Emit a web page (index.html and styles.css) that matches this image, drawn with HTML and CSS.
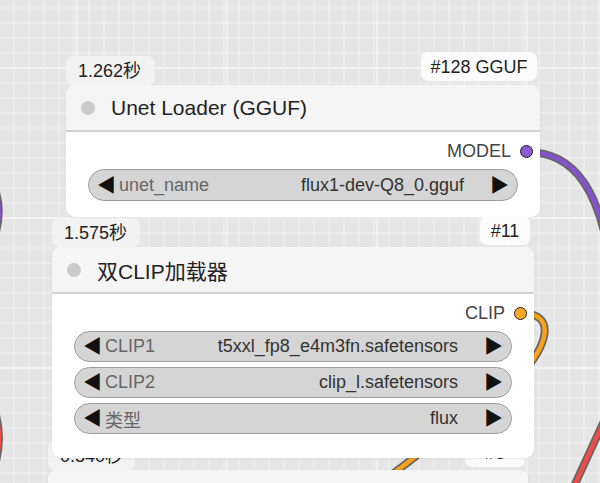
FILE: index.html
```html
<!DOCTYPE html>
<html lang="zh">
<head>
<meta charset="utf-8">
<title>Nodes</title>
<link rel="stylesheet" href="styles.css">
</head>
<body>
<div class="canvas">
  <svg class="links" width="600" height="483" viewBox="0 0 600 483">
    <g class="edge">
      <path d="M527 152 C 577 152, 600 195, 610 262"/>
      <path d="M-10 178 C 2 200, 2 222, -10 248"/>
      <path d="M-10 398 C 2 425, 2 450, -10 480"/>
      <path d="M610 408 L 570 495"/>
      <path d="M520 313 C 558 313, 548 346, 518 378 L 330 522"/>
    </g>
    <path class="core purple" d="M527 152 C 577 152, 600 195, 610 262"/>
    <path class="core purple" d="M-10 178 C 2 200, 2 222, -10 248"/>
    <path class="core red" d="M-10 398 C 2 425, 2 450, -10 480"/>
    <path class="core red" d="M610 408 L 570 495"/>
    <path class="core orange" d="M520 313 C 558 313, 548 346, 518 378 L 330 522"/>
  </svg>

  <!-- node 3 (mostly hidden) -->
  <div class="badge time n3-time">0.540秒</div>
  <div class="badge id n3-id">#6</div>
  <div class="node n3">
    <div class="node-head"><span class="dot"></span><span class="title">CLIP文本编码器</span></div>
  </div>

  <!-- node 1 -->
  <div class="badge time n1-time">1.262秒</div>
  <div class="badge id n1-id">#128 GGUF</div>
  <div class="node n1">
    <div class="node-head"><span class="dot"></span><span class="title">Unet Loader (GGUF)</span></div>
    <div class="node-body">
      <div class="output"><span>MODEL</span><span class="slot purple-slot"></span></div>
      <div class="widgets">
        <div class="widget tall"><span class="arr">◀</span><span class="lbl">unet_name</span><span class="val">flux1-dev-Q8_0.gguf</span><span class="arr">▶</span></div>
      </div>
    </div>
  </div>

  <!-- node 2 -->
  <div class="badge time n2-time">1.575秒</div>
  <div class="badge id n2-id">#11</div>
  <div class="node n2">
    <div class="node-head"><span class="dot"></span><span class="title">双CLIP加载器</span></div>
    <div class="node-body">
      <div class="output"><span>CLIP</span><span class="slot orange-slot"></span></div>
      <div class="widgets">
        <div class="widget"><span class="arr">◀</span><span class="lbl">CLIP1</span><span class="val">t5xxl_fp8_e4m3fn.safetensors</span><span class="arr">▶</span></div>
        <div class="widget"><span class="arr">◀</span><span class="lbl">CLIP2</span><span class="val">clip_l.safetensors</span><span class="arr">▶</span></div>
        <div class="widget"><span class="arr">◀</span><span class="lbl">类型</span><span class="val">flux</span><span class="arr">▶</span></div>
      </div>
    </div>
  </div>
</div>
</body>
</html>
```

FILE: styles.css
```css
* { box-sizing: border-box; }
html, body { margin: 0; padding: 0; }
body {
  width: 600px;
  height: 483px;
  overflow: hidden;
  font-family: "Liberation Sans", Arial, "Noto Sans CJK SC", sans-serif;
  color: #222;
}
.canvas {
  position: relative;
  width: 600px;
  height: 483px;
  overflow: hidden;
  background-color: #e5e5e5;
  background-image:
    linear-gradient(to right, rgba(255,255,255,0.4) 0 2px, transparent 2px),
    linear-gradient(to bottom, rgba(255,255,255,0.4) 0 2px, transparent 2px),
    linear-gradient(to right, rgba(255,255,255,0.22) 0 2px, transparent 2px),
    linear-gradient(to bottom, rgba(255,255,255,0.22) 0 2px, transparent 2px);
  background-size: 150px 150px, 150px 150px, 15px 15px, 15px 15px;
  background-position: 76px 0, 0 67px, 13px 0, 0 7px;
}
.links { position: absolute; left: 0; top: 0; }
.edge path { fill: none; stroke: #666; stroke-width: 8; }
.core { fill: none; stroke-width: 4.5; }
.purple { stroke: #8552cc; }
.red { stroke: #ee4b4b; }
.orange { stroke: #f9a11b; }

.badge {
  position: absolute;
  height: 29px;
  display: flex;
  align-items: center;
  padding: 0 10px 0 12px;
  border-radius: 7px;
  font-size: 18px;
  color: #222;
  line-height: 1;
  white-space: nowrap;
}
.badge.time { background: #f2f2f2; }
.badge.id { background: #fbfbfb; justify-content: center; padding: 0; }

.n1-time { left: 66px; top: 56px; width: 89px; }
.n1-id { left: 421px; top: 52px; width: 116px; }
.n2-time { left: 52px; top: 218px; width: 88px; }
.n2-id { left: 480px; top: 216px; width: 50px; }
.n3-time { left: 48px; top: 441px; width: 87px; }
.n3-id { left: 465px; top: 438px; width: 60px; }

.node {
  position: absolute;
  background: #fff;
  border-radius: 9px;
  box-shadow: 0 1px 2px rgba(0,0,0,0.08);
  overflow: hidden;
  display: flex;
  flex-direction: column;
}
.n1 { left: 66px; top: 85px; width: 474px; height: 132px; }
.n2 { left: 52px; top: 247px; width: 482px; height: 211px; }
.n3 { left: 48px; top: 470px; width: 480px; height: 60px; }

.node-head {
  height: 47px;
  flex: 0 0 47px;
  background: #f5f5f5;
  border-bottom: 2px solid #d2d2d2;
  display: flex;
  align-items: center;
  padding-left: 15px;
  gap: 16px;
}
.dot {
  width: 14px;
  height: 14px;
  border-radius: 50%;
  background: #cbcbcb;
  flex: 0 0 14px;
}
.title { font-size: 21px; color: #222; white-space: nowrap; }

.node-body {
  display: flex;
  flex-direction: column;
  padding: 9px 0 0;
}
.output {
  height: 20px;
  display: flex;
  align-items: center;
  justify-content: flex-end;
  gap: 9px;
  padding-right: 7px;
  font-size: 18px;
  color: #444;
}
.slot {
  width: 13px;
  height: 13px;
  border-radius: 50%;
  border: 1.5px solid #222;
}
.purple-slot { background: #8a5ad2; }
.orange-slot { background: #ffa726; }

.widgets {
  display: flex;
  flex-direction: column;
  gap: 5px;
  margin-top: 8px;
  padding: 0 22px;
}
.widget {
  height: 31px;
  display: flex;
  align-items: center;
  border: 1.5px solid #9d9d9d;
  border-radius: 16px;
  background: #d5d5d5;
  padding: 0 8px 0 8px;
  font-size: 18px;
  white-space: nowrap;
}
.widget.tall { height: 32px; }
.arr { color: #111; font-size: 19px; line-height: 1; }
.lbl { color: #666; margin-left: 3px; }
.val { color: #333; margin-left: auto; margin-right: 26px; }
```
